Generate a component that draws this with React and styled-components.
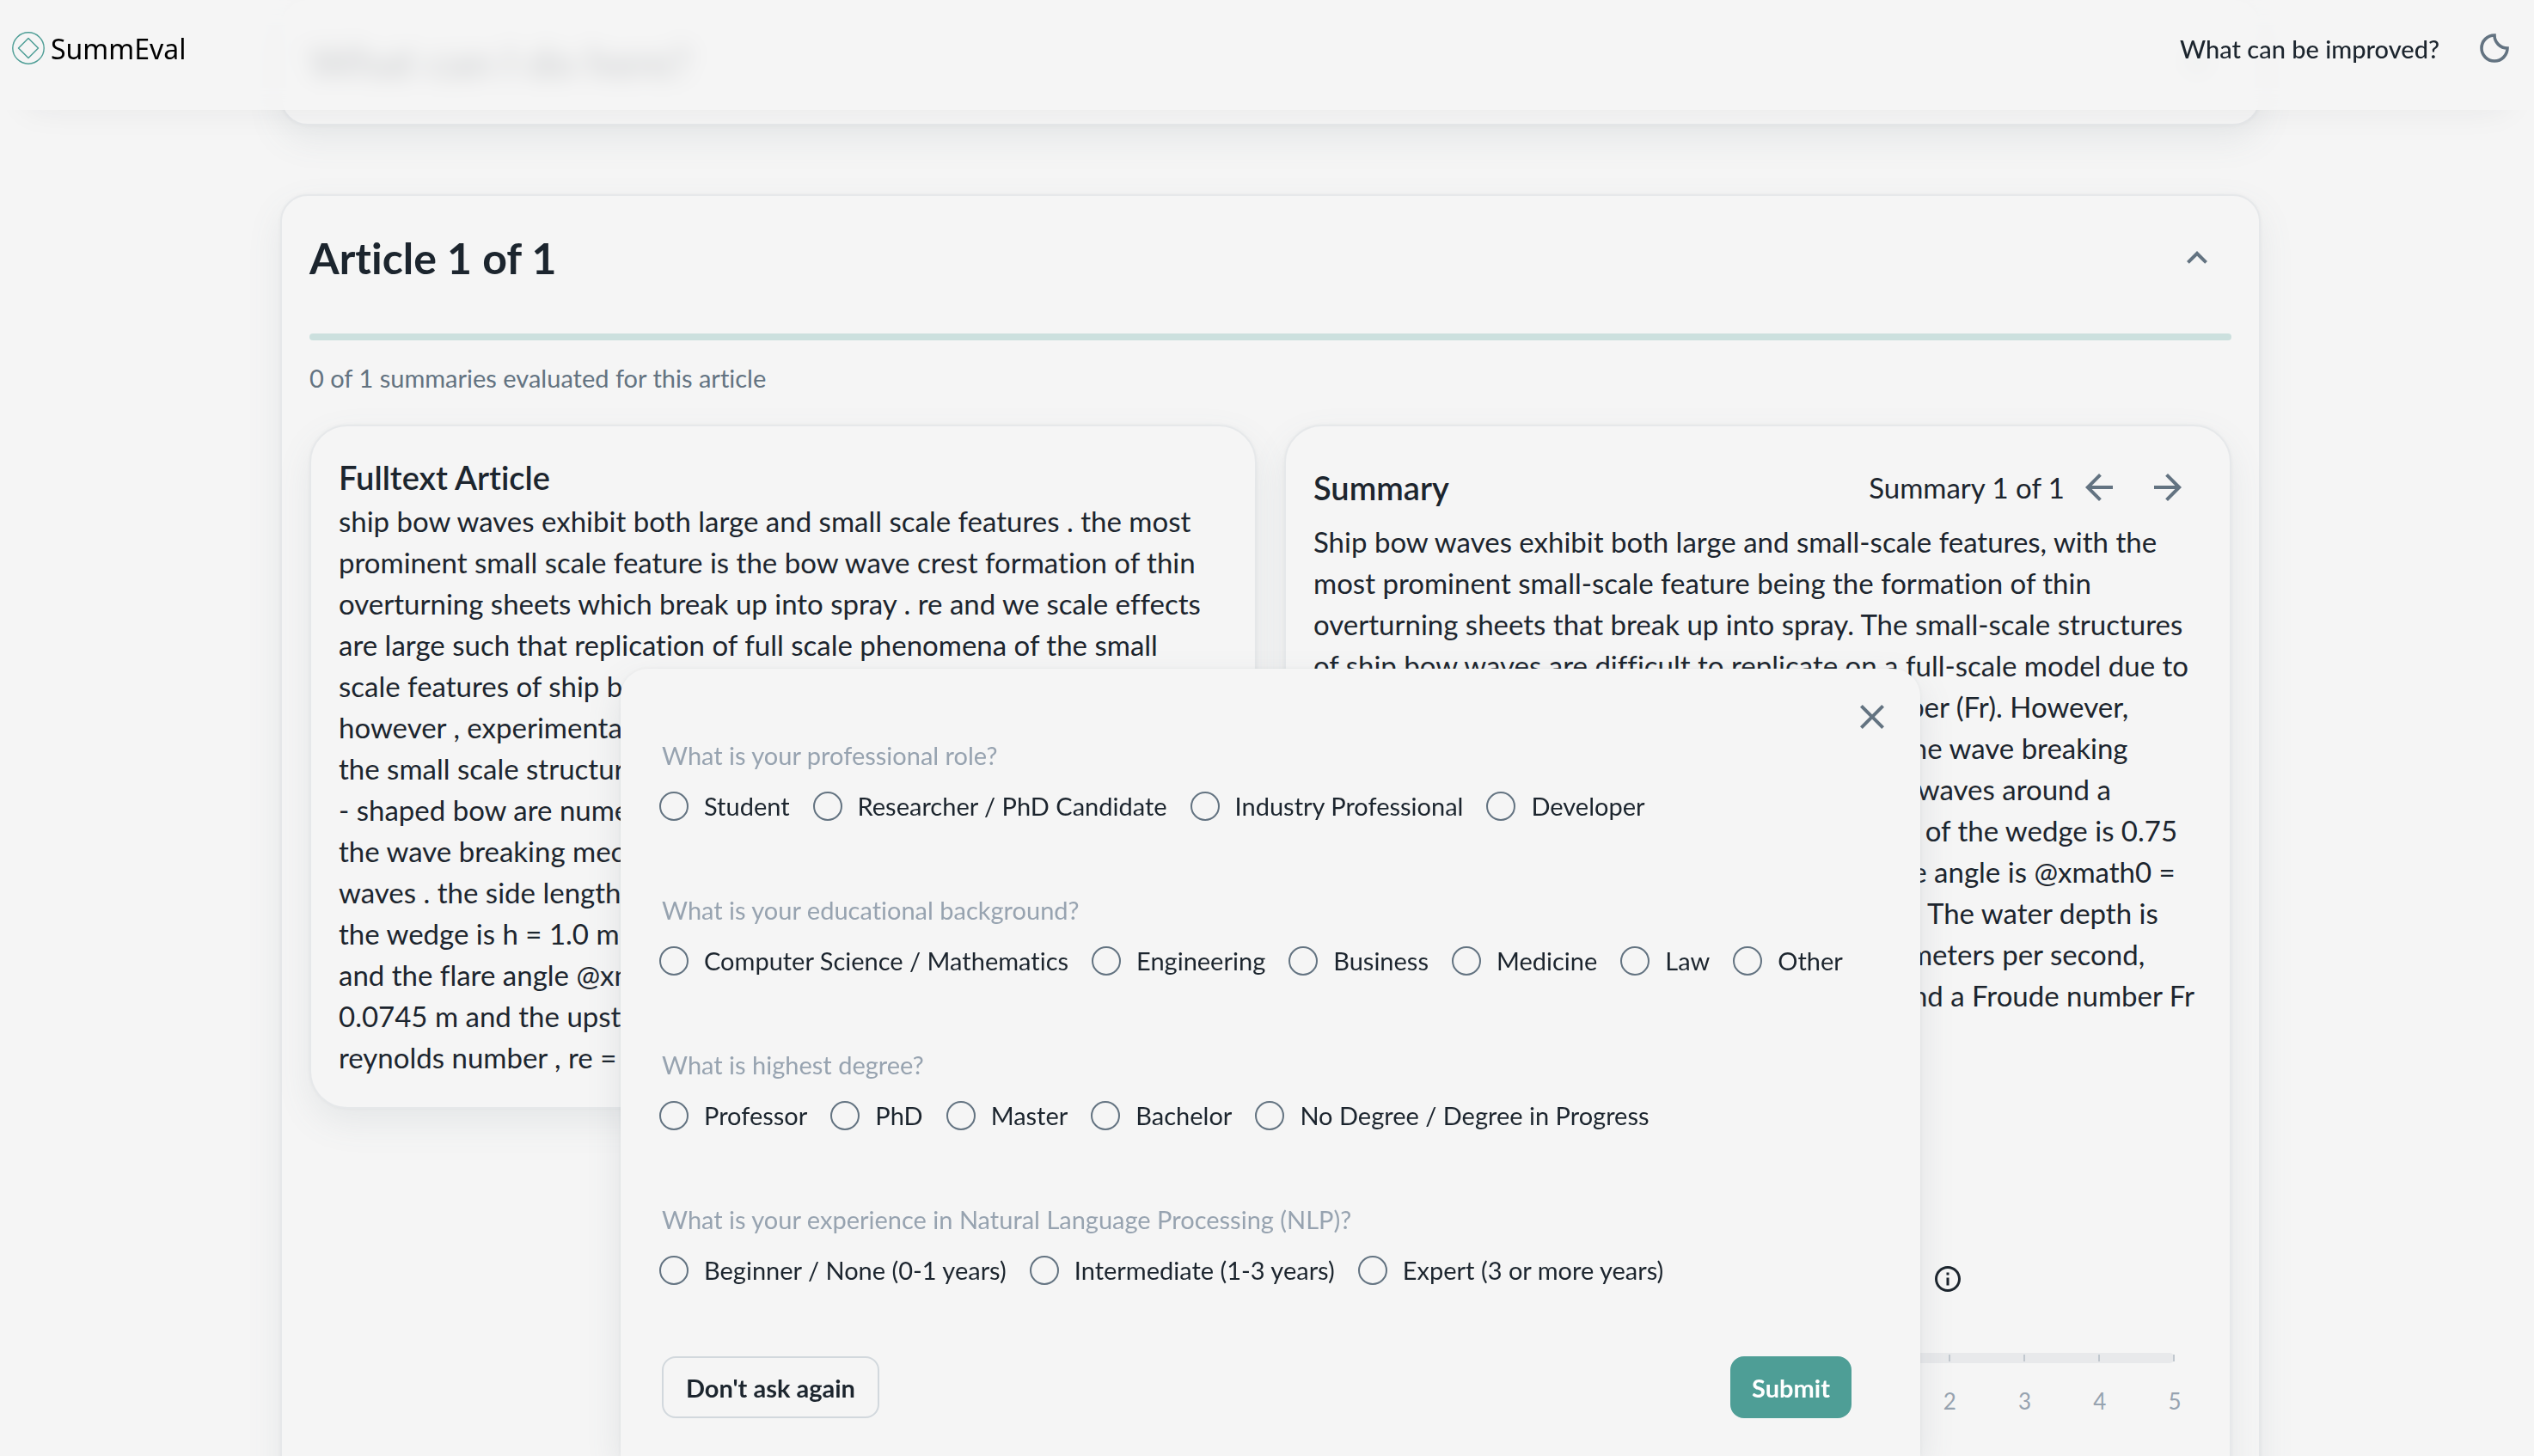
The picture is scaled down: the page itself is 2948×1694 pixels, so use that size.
import React from "react";
import styled, { createGlobalStyle } from "styled-components";
import {
  MdArrowBack,
  MdArrowForward,
  MdClose,
  MdExpandLess,
  MdExpandMore,
  MdOutlineInfo,
} from "react-icons/md";

const ink = "#1c252e";
const slate = "#637381";
const muted = "#97a3b0";
const surface = "#f5f5f5";
const teal = "#4e9e96";
const edge = "#e6e8ea";

const GlobalStyle = createGlobalStyle`
  * { box-sizing: border-box; }
  body {
    margin: 0;
    overflow: hidden;
    background: ${surface};
    color: ${ink};
    font-family: Lato, "Open Sans", sans-serif;
    font-variant-ligatures: none;
  }
  button, input { font: inherit; }
`;

const Page = styled.div`
  height: 100vh;
  overflow: hidden;
`;

const Header = styled.header`
  position: fixed;
  inset: 0 0 auto;
  z-index: 2;
  height: 128px;
  padding: 0 6px 16px 14px;
  display: flex;
  align-items: center;
  justify-content: space-between;
  background: rgba(245, 245, 245, 0.85);
  backdrop-filter: blur(12px);
  box-shadow: 0 28px 40px -32px rgba(33, 43, 54, 0.08);
`;

const Brand = styled.a`
  display: flex;
  align-items: center;
  gap: 7px;
  color: #000;
  font-family: "Noto Sans", sans-serif;
  font-size: 32px;
  text-decoration: none;
`;

const HeaderActions = styled.nav`
  display: flex;
  align-items: center;
  gap: 24px;
`;

const HeaderLink = styled.a`
  color: ${ink};
  font-size: 29px;
  font-weight: 500;
  text-decoration: none;
`;

const IconButton = styled.button`
  width: 80px;
  height: 80px;
  padding: 0;
  border: 0;
  background: none;
  color: ${slate};
  display: grid;
  place-items: center;
  font-size: 48px;
  cursor: pointer;
`;

const Main = styled.main`
  margin: -2px 318px 0 326px;
  display: flex;
  flex-direction: column;
  gap: 80px;
`;

const Card = styled.section`
  flex-shrink: 0;
  padding: 32px;
  border: 2px solid ${edge};
  border-radius: 32px;
  background: ${surface};
  box-shadow:
    0 0 4px rgba(33, 43, 54, 0.04),
    0 16px 40px rgba(99, 115, 129, 0.1);
`;

const Panel = styled(Card)`
  padding-bottom: 34px;
  border-radius: 44px;
`;

const CardHeader = styled.div`
  display: flex;
  align-items: center;
  justify-content: space-between;
`;

const Title = styled.h1`
  margin: 0;
  font-size: 50px;
  line-height: 60px;
  font-weight: 700;
`;

const Progress = styled.div`
  height: 8px;
  margin: 48px 0 24px;
  border-radius: 4px;
  background: #cce0de;
`;

const ProgressText = styled.p`
  margin: 0 0 34px;
  color: ${slate};
  font-size: 29px;
  line-height: 40px;
`;

const Columns = styled.div`
  display: grid;
  grid-template-columns: 1fr 1fr;
  gap: 32px;
  align-items: start;
`;

const Subtitle = styled.h2`
  margin: 0;
  font-size: 38px;
  line-height: 54px;
  font-weight: 600;
`;

const SummaryHeader = styled(CardHeader)`
  height: 78px;
`;

const Pager = styled.div`
  display: flex;
  align-items: center;
  font-size: 33px;
`;

const Passage = styled.p`
  margin: 0;
  font-size: 33px;
  line-height: 48px;
  white-space: pre;
`;

const Rating = styled.div`
  width: 382px;
  min-height: 800px;
  margin: 240px 0 0 auto;
  padding-right: 32px;
`;

const RatingLabel = styled.label`
  display: flex;
  align-items: center;
  gap: 16px;
  height: 36px;
  font-size: 26px;
  white-space: nowrap;

  svg { font-size: 36px; }
`;

const Slider = styled.div`
  position: relative;
  height: 12px;
  margin-top: 68px;
`;

const SliderInput = styled.input`
  display: block;
  width: 100%;
  height: 12px;
  margin: 0;
  appearance: none;
  border-radius: 6px;
  background: #e8e9eb;
`;

const Ticks = styled.div`
  position: absolute;
  inset: 2px 0;
  display: flex;
  justify-content: space-between;
  pointer-events: none;
`;

const Tick = styled.span`
  width: 2px;
  background: #c1c8cf;
`;

const Scale = styled.div`
  display: flex;
  justify-content: space-between;
  margin: 28px -10px 0 -9px;
  color: ${muted};
  font-size: 26px;
  line-height: 32px;
`;

const Mark = styled.span`
  width: 20px;
  text-align: center;
`;

const Overlay = styled.div`
  position: fixed;
  inset: 0;
  z-index: 3;
  padding-left: 8px;
  display: flex;
  align-items: flex-end;
  justify-content: center;
`;

const Modal = styled.form`
  position: relative;
  width: 1512px;
  padding: 80px 80px 44px 48px;
  display: flex;
  flex-direction: column;
  gap: 82px;
  border-radius: 32px 32px 0 0;
  background: ${surface};
  box-shadow:
    0 0 4px rgba(33, 43, 54, 0.06),
    0 16px 40px rgba(99, 115, 129, 0.14);
`;

const CloseSlot = styled.div`
  position: absolute;
  top: 16px;
  right: 16px;
`;

const Question = styled.fieldset`
  min-width: 0;
  margin: 0;
  padding: 0;
  border: 0;
`;

const QuestionText = styled.legend`
  margin-bottom: 20px;
  padding: 0;
  color: ${muted};
  font-size: 29px;
  line-height: 42px;
`;

const Options = styled.div`
  display: flex;
  gap: 27px;
  margin-left: -3px;
`;

const Option = styled.label`
  display: flex;
  align-items: center;
  gap: 18px;
  font-size: 29px;
  line-height: 36px;
  white-space: nowrap;
`;

const Radio = styled.input`
  appearance: none;
  width: 34px;
  height: 34px;
  margin: 0;
  border: 2px solid ${slate};
  border-radius: 50%;

  &:checked { box-shadow: inset 0 0 0 6px ${surface}, inset 0 0 0 17px ${teal}; }
`;

const Actions = styled.div`
  display: flex;
  justify-content: space-between;
`;

const Button = styled.button`
  height: 72px;
  padding: 0 ${(p) => (p.$primary ? 23 : 26)}px;
  border: 2px solid ${(p) => (p.$primary ? teal : "#d2d8dd")};
  border-radius: 16px;
  background: ${(p) => (p.$primary ? teal : "transparent")};
  color: ${(p) => (p.$primary ? "#fff" : ink)};
  font-size: 29px;
  font-weight: 700;
  cursor: pointer;
`;

const Logo = () => (
  <svg width="38" height="38" viewBox="0 0 38 38" fill="none" stroke={teal} strokeLinejoin="round" aria-hidden="true">
    <circle cx="19" cy="19" r="18.2" strokeWidth="1.4" />
    <path d="M19 7.5 30.5 19 19 30.5 7.5 19Z" strokeWidth="1.5" />
  </svg>
);

const Moon = () => (
  <svg width="36" height="36" viewBox="0 0 36 36" fill="none" stroke="currentColor" strokeWidth="3.6" aria-hidden="true">
    <path d="M18 3A15 15 0 1 0 33 18A15 15 0 0 1 18 3Z" />
  </svg>
);

const article = `ship bow waves exhibit both large and small scale features . the most
prominent small scale feature is the bow wave crest formation of thin
overturning sheets which break up into spray . re and we scale effects
are large such that replication of full scale phenomena of the small
scale features of ship bow waves is not possible on model scale ;
however , experimental measurements have been made to study
the small scale structures . the bow waves around a wedge
- shaped bow are numerically simulated in order to study
the wave breaking mechanisms of plunging bow
waves . the side length of the wedge is l = 0.75 m , the height of
the wedge is h = 1.0 m , the half wedge angle is @xmath0
and the flare angle @xmath1 . the water depth is d =
0.0745 m and the upstream velocity is u = 2.5 m / s . the
reynolds number , re = 1.64 , and the froude number`;

const summary = `Ship bow waves exhibit both large and small-scale features, with the
most prominent small-scale feature being the formation of thin
overturning sheets that break up into spray. The small-scale structures
of ship bow waves are difficult to replicate on a full-scale model due to
the large Reynolds number (Re) and Froude number (Fr). However,
experiments have shown it possible to observe the wave breaking
mechanisms which are seen to occur in plunging waves around a
wedge-shaped bow at full model size. The length of the wedge is 0.75
meters, the height is 1.0 meters and the side flare angle is @xmath0 =
@xmath1, with a half wedge angle of 20 degrees. The water depth is
0.0745 meters, the upstream velocity is U = 2.5 meters per second,
and there was a Reynolds number of Re = 1.64 and a Froude number Fr
= 2.93.`;

const questions = [
  {
    name: "role",
    text: "What is your professional role?",
    options: ["Student", "Researcher / PhD Candidate", "Industry Professional", "Developer"],
  },
  {
    name: "background",
    text: "What is your educational background?",
    options: ["Computer Science / Mathematics", "Engineering", "Business", "Medicine", "Law", "Other"],
  },
  {
    name: "degree",
    text: "What is highest degree?",
    options: ["Professor", "PhD", "Master", "Bachelor", "No Degree / Degree in Progress"],
  },
  {
    name: "experience",
    text: "What is your experience in Natural Language Processing (NLP)?",
    options: ["Beginner / None (0-1 years)", "Intermediate (1-3 years)", "Expert (3 or more years)"],
  },
];

const marks = [1, 2, 3, 4, 5];

export default function App() {
  return (
    <Page>
      <GlobalStyle />
      <Header>
        <Brand href="#">
          <Logo />
          SummEval
        </Brand>
        <HeaderActions>
          <HeaderLink href="#feedback">What can be improved?</HeaderLink>
          <IconButton type="button" aria-label="Dark mode">
            <Moon />
          </IconButton>
        </HeaderActions>
      </Header>

      <Main>
        <Card>
          <CardHeader>
            <Title as="h2">What can I do here?</Title>
            <IconButton type="button" aria-label="Expand">
              <MdExpandMore />
            </IconButton>
          </CardHeader>
        </Card>

        <Card>
          <CardHeader>
            <Title>Article 1 of 1</Title>
            <IconButton type="button" aria-label="Collapse">
              <MdExpandLess />
            </IconButton>
          </CardHeader>
          <Progress role="progressbar" aria-valuemin={0} aria-valuemax={1} aria-valuenow={0} />
          <ProgressText>0 of 1 summaries evaluated for this article</ProgressText>

          <Columns>
            <Panel>
              <Subtitle>Fulltext Article</Subtitle>
              <Passage>{article}</Passage>
            </Panel>

            <Panel>
              <SummaryHeader>
                <Subtitle>Summary</Subtitle>
                <Pager>
                  Summary 1 of 1
                  <IconButton type="button" aria-label="Previous summary">
                    <MdArrowBack />
                  </IconButton>
                  <IconButton type="button" aria-label="Next summary">
                    <MdArrowForward />
                  </IconButton>
                </Pager>
              </SummaryHeader>
              <Passage>{summary}</Passage>
              <Rating>
                <RatingLabel htmlFor="rating">
                  Rate <MdOutlineInfo />
                </RatingLabel>
                <Slider>
                  <SliderInput id="rating" type="range" min="1" max="5" defaultValue="1" />
                  <Ticks>
                    {marks.map((m) => (
                      <Tick key={m} />
                    ))}
                  </Ticks>
                </Slider>
                <Scale>
                  {marks.map((m) => (
                    <Mark key={m}>{m}</Mark>
                  ))}
                </Scale>
              </Rating>
            </Panel>
          </Columns>
        </Card>
      </Main>

      <Overlay>
        <Modal role="dialog" aria-label="About you" onSubmit={(e) => e.preventDefault()}>
          <CloseSlot>
            <IconButton type="button" aria-label="Close">
              <MdClose />
            </IconButton>
          </CloseSlot>
          {questions.map((q) => (
            <Question key={q.name}>
              <QuestionText>{q.text}</QuestionText>
              <Options>
                {q.options.map((o) => (
                  <Option key={o}>
                    <Radio type="radio" name={q.name} value={o} />
                    {o}
                  </Option>
                ))}
              </Options>
            </Question>
          ))}
          <Actions>
            <Button type="button">Don't ask again</Button>
            <Button type="submit" $primary>
              Submit
            </Button>
          </Actions>
        </Modal>
      </Overlay>
    </Page>
  );
}
